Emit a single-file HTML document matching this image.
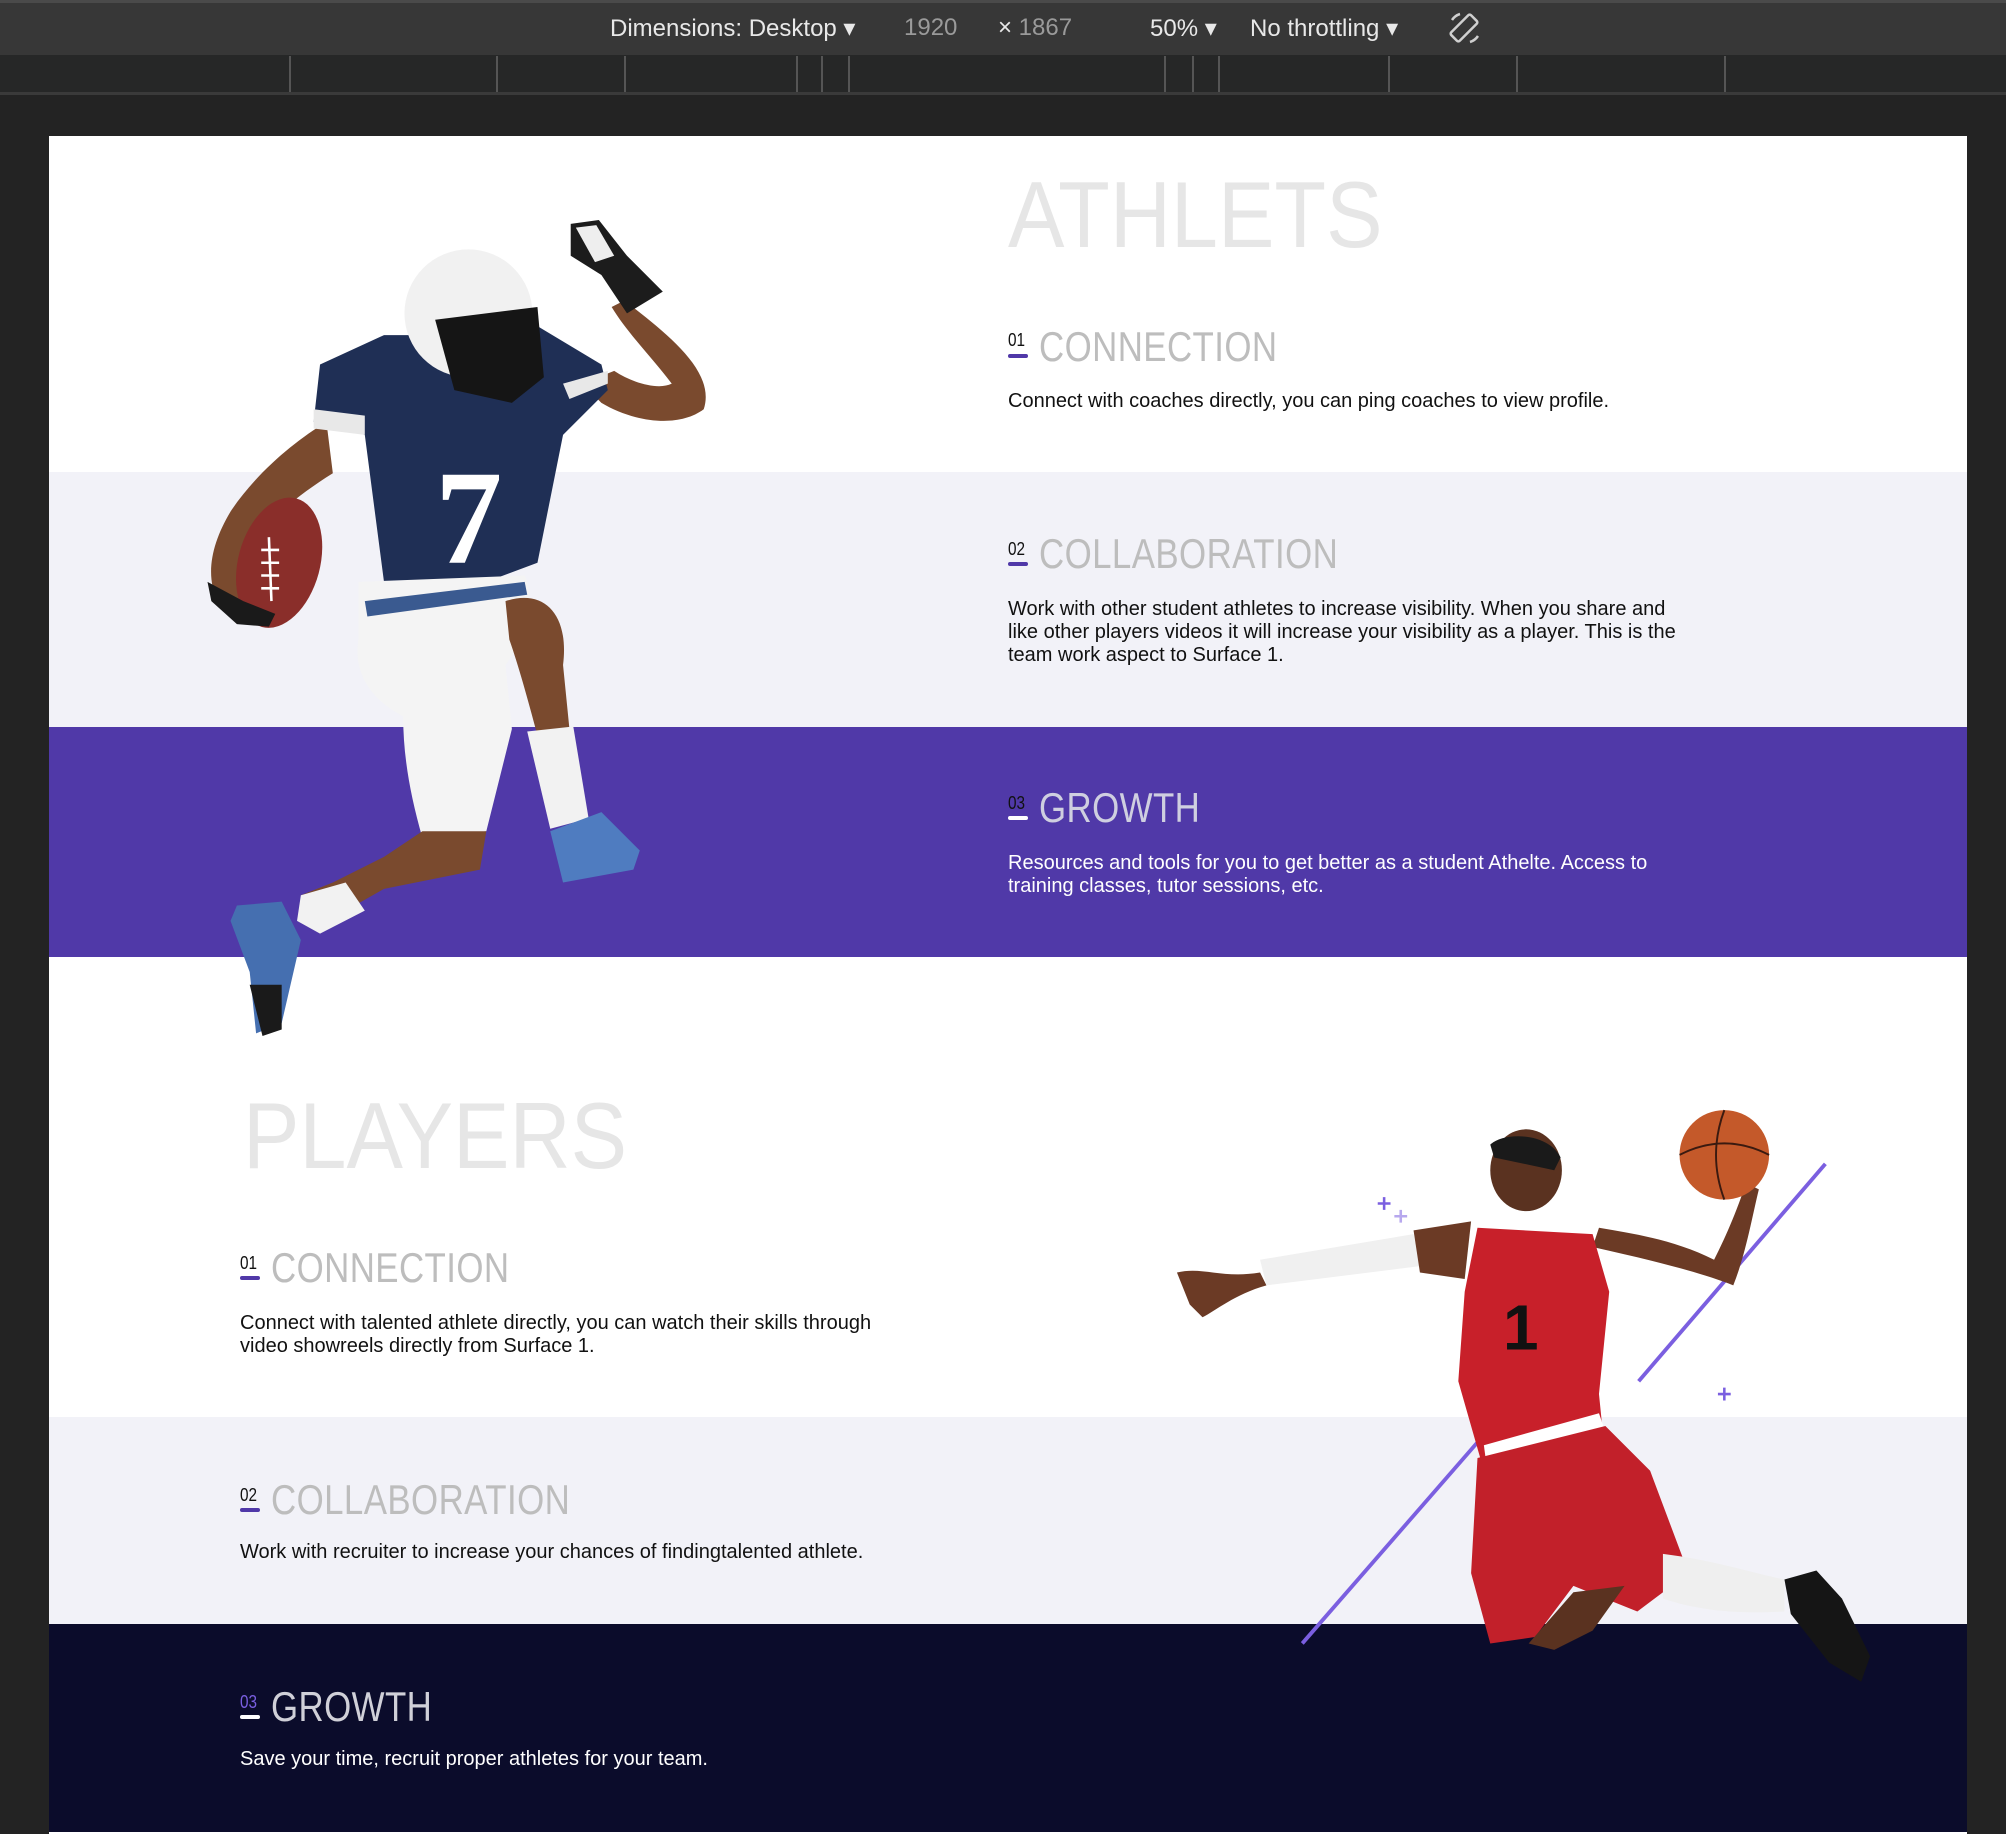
<!DOCTYPE html>
<html><head><meta charset="utf-8"><style>
*{margin:0;padding:0;box-sizing:border-box}
body{width:2006px;height:1834px;background:#232323;position:relative;overflow:hidden;font-family:"Liberation Sans",sans-serif}
.a{position:absolute}
.tb{left:0;top:0;width:2006px;height:55px;background:#373737;border-top:3px solid #4a4a4a}
.tbt{top:14px;font-size:24px;color:#e8e8e8;white-space:nowrap}
.rl{left:0;top:55px;width:2006px;height:40px;background:#262727;border-bottom:3px solid #3a3a3a}
.tick{top:56px;width:2px;height:36px;background:#555}
.page{left:49px;top:136px;width:1918px;height:1698px;background:#fff}
.big{font-size:94px;line-height:94px;color:#e6e6e6;transform:scaleX(.9);transform-origin:left top;white-space:nowrap}
.h{font-size:42px;line-height:42px;color:#bdbdbd;transform:scaleX(.83);transform-origin:left top;white-space:nowrap;letter-spacing:.5px}
.n{font-size:18px;line-height:18px;color:#111;transform:scaleX(.85);transform-origin:left top}
.bar{width:20px;height:4px;border-radius:2px;background:#5038a8}
.p{font-size:20px;line-height:23px;color:#111;white-space:nowrap}
</style></head><body>
<div class="a tb"></div>
<div class="a tbt" style="left:610px">Dimensions: Desktop ▾</div>
<div class="a tbt" style="left:904px;color:#9a9a9a">1920</div>
<div class="a tbt" style="left:998px;color:#9a9a9a"><span style="color:#e8e8e8">×</span> 1867</div>
<div class="a tbt" style="left:1150px">50% ▾</div>
<div class="a tbt" style="left:1250px">No throttling ▾</div>
<svg class="a" style="left:1446px;top:10px" width="38" height="38" viewBox="0 0 38 38"><g fill="none" stroke="#cfcfcf" stroke-width="2.5"><rect x="12" y="4" width="12" height="28" rx="2" transform="rotate(45 18 18)"/><path d="M6 10a15 15 0 0 1 8-6M32 26a15 15 0 0 1-8 6"/></g></svg>
<div class="a rl"></div>
<div class="a tick" style="left:289px"></div><div class="a tick" style="left:496px"></div><div class="a tick" style="left:624px"></div><div class="a tick" style="left:796px"></div><div class="a tick" style="left:821px"></div><div class="a tick" style="left:848px"></div><div class="a tick" style="left:1164px"></div><div class="a tick" style="left:1192px"></div><div class="a tick" style="left:1218px"></div><div class="a tick" style="left:1388px"></div><div class="a tick" style="left:1516px"></div><div class="a tick" style="left:1724px"></div>

<div class="a page"></div>
<div class="a" style="left:49px;top:472px;width:1918px;height:255px;background:#f2f2f8"></div>
<div class="a" style="left:49px;top:727px;width:1918px;height:230px;background:#5039a8"></div>
<div class="a" style="left:49px;top:1417px;width:1918px;height:207px;background:#f2f2f8"></div>
<div class="a" style="left:49px;top:1624px;width:1918px;height:208px;background:#0b0c2b"></div>

<svg class="a" style="left:0;top:0" width="2006" height="1834" viewBox="0 0 1568 1434">
<g>
<path d="M488 235 C520 260 560 290 550 320 C530 335 495 330 470 315 L455 300 L480 290 C495 300 515 305 525 300 C510 280 490 260 478 240Z" fill="#7a4a2e"/>
<path d="M446 175 L468 172 L490 200 L518 228 L490 245 L470 215 L446 200Z" fill="#1c1c1c"/>
<path d="M450 178 L466 176 L480 200 L465 205Z" fill="#eee"/>
<path d="M255 330 C230 345 200 370 180 400 C165 425 160 450 170 470 L195 480 L185 450 C195 420 220 395 260 370Z" fill="#7a4a2e"/>
<ellipse cx="218" cy="440" rx="32" ry="52" transform="rotate(15 218 440)" fill="#8a2e2a"/>
<path d="M210 420 L212 470 M204 430h14M204 440h14M204 450h14M204 460h14" stroke="#fff" stroke-width="2"/>
<path d="M162 455 L190 470 L215 480 L210 490 L185 488 L165 470Z" fill="#1a1a1a"/>
<path d="M250 285 L300 262 L340 262 L420 255 L470 285 L475 305 L440 340 L420 440 L380 455 L300 455 L285 340 L245 330Z" fill="#1f2f55"/>
<path d="M245 320 L285 325 L285 340 L245 335Z M440 300 L475 290 L475 300 L445 312Z" fill="#e8e8e8"/>
<text x="340" y="440" font-family="Liberation Serif,serif" font-weight="bold" font-size="105" fill="#fff">7</text>
<circle cx="366" cy="245" r="50" fill="#f1f1f1"/>
<path d="M340 250 L420 240 L425 295 L400 315 L355 305Z" fill="#151515"/>
<path d="M280 455 L410 450 C420 470 410 500 395 520 L400 570 L380 650 L330 655 C320 620 315 590 315 560 C295 550 275 530 280 500Z" fill="#f4f4f4"/>
<path d="M285 470 L410 455 L412 465 L287 482Z" fill="#3a5a90"/>
<path d="M395 470 C425 460 445 480 440 520 L445 570 L420 575 C412 545 405 520 398 500Z" fill="#7a4a2e"/>
<path d="M412 572 L448 568 L460 640 L430 648Z" fill="#f2f2f2"/>
<path d="M430 650 L470 635 L500 665 L495 680 L440 690Z" fill="#4f7cc0"/>
<path d="M330 650 L380 650 L375 680 L300 695 L270 712 L245 718 L235 700 L260 690 L300 670Z" fill="#7a4a2e"/>
<path d="M235 700 L270 690 L285 712 L250 730 L232 720Z" fill="#f2f2f2"/>
<path d="M185 708 L220 705 L235 735 L220 800 L200 808 L195 760 L180 720Z" fill="#456fb0"/>
<path d="M195 770 L220 770 L220 805 L205 810Z" fill="#1a1a1a"/>
</g>
<g stroke="#7b5fe0" stroke-width="3">
<line x1="1427" y1="910" x2="1281" y2="1080"/>
<line x1="1160" y1="1122" x2="1018" y2="1285"/>
<path d="M1077 941h10M1082 936v10M1343 1090h10M1348 1085v10" stroke-width="2"/>
<path d="M1090 951h10M1095 946v10" stroke="#b7a8ee" stroke-width="2"/>
</g>
<g>
<path d="M920 995 C940 990 955 1000 985 995 L990 1005 C965 1012 950 1025 940 1030 L930 1020Z" fill="#6b3a25"/>
<path d="M985 985 L1105 965 L1110 990 L990 1005Z" fill="#f0f0f0"/>
<path d="M1105 962 L1150 955 L1145 1000 L1110 995Z" fill="#6b3a25"/>
<path d="M1245 975 C1290 985 1330 995 1355 1005 C1365 980 1370 950 1375 930 L1365 925 C1355 955 1345 975 1340 985 C1310 970 1280 965 1250 960Z" fill="#6b3a25"/>
<ellipse cx="1193" cy="915" rx="28" ry="32" fill="#5a3220"/>
<path d="M1165 895 C1175 885 1210 885 1220 905 L1215 915 L1168 905Z" fill="#1a1a1a"/>
<path d="M1155 960 L1245 965 L1258 1010 L1250 1090 L1255 1140 L1160 1150 L1140 1080 L1145 1010Z" fill="#c8202a"/>
<path d="M1160 1130 L1250 1105 L1255 1120 L1162 1145Z" fill="#fff"/>
<text x="1175" y="1055" font-family="Liberation Sans,sans-serif" font-weight="bold" font-size="50" fill="#111">1</text>
<path d="M1155 1140 L1255 1115 L1290 1150 L1320 1230 L1280 1260 L1230 1240 L1200 1280 L1165 1285 L1150 1230Z" fill="#c2202a"/>
<path d="M1300 1215 C1340 1220 1370 1230 1395 1235 L1395 1260 C1360 1262 1330 1260 1300 1250Z" fill="#efefef"/>
<path d="M1230 1245 L1270 1240 L1245 1275 L1215 1290 L1195 1285Z" fill="#5a3220"/>
<path d="M1395 1235 L1420 1228 L1440 1250 L1462 1295 L1455 1315 L1430 1300 L1400 1262Z" fill="#151515"/>
<circle cx="1348" cy="903" r="35" fill="#c4592a"/>
<path d="M1313 903 Q1348 885 1383 903 M1348 868 Q1335 903 1348 938" stroke="#3a1a10" stroke-width="1.5" fill="none"/>
</g>
</svg>

<div class="a big" style="left:1008px;top:168px">ATHLETS</div>
<div class="a n" style="left:1008px;top:331px">01</div><div class="a bar" style="left:1008px;top:354px"></div>
<div class="a h" style="left:1039px;top:326px">CONNECTION</div>
<div class="a p" style="left:1008px;top:390px">Connect with coaches directly, you can ping coaches to view profile.</div>

<div class="a n" style="left:1008px;top:540px">02</div><div class="a bar" style="left:1008px;top:562px"></div>
<div class="a h" style="left:1039px;top:533px">COLLABORATION</div>
<div class="a p" style="left:1008px;top:598px">Work with other student athletes to increase visibility. When you share and<br>like other players videos it will increase your visibility as a player. This is the<br>team work aspect to Surface 1.</div>

<div class="a n" style="left:1008px;top:794px">03</div><div class="a bar" style="left:1008px;top:816px;background:#fff"></div>
<div class="a h" style="left:1039px;top:787px;color:#cfcfe0">GROWTH</div>
<div class="a p" style="left:1008px;top:852px;color:#fff">Resources and tools for you to get better as a student Athelte. Access to<br>training classes, tutor sessions, etc.</div>

<div class="a big" style="left:243px;top:1089px">PLAYERS</div>
<div class="a n" style="left:240px;top:1254px">01</div><div class="a bar" style="left:240px;top:1276px"></div>
<div class="a h" style="left:271px;top:1247px">CONNECTION</div>
<div class="a p" style="left:240px;top:1312px">Connect with talented athlete directly, you can watch their skills through<br>video showreels directly from Surface 1.</div>

<div class="a n" style="left:240px;top:1486px">02</div><div class="a bar" style="left:240px;top:1508px"></div>
<div class="a h" style="left:271px;top:1479px">COLLABORATION</div>
<div class="a p" style="left:240px;top:1541px">Work with recruiter to increase your chances of findingtalented athlete.</div>

<div class="a n" style="left:240px;top:1693px;color:#7a5fe0">03</div><div class="a bar" style="left:240px;top:1715px;background:#fff"></div>
<div class="a h" style="left:271px;top:1686px;color:#d0d0d8">GROWTH</div>
<div class="a p" style="left:240px;top:1748px;color:#fff">Save your time, recruit proper athletes for your team.</div>
</body></html>
